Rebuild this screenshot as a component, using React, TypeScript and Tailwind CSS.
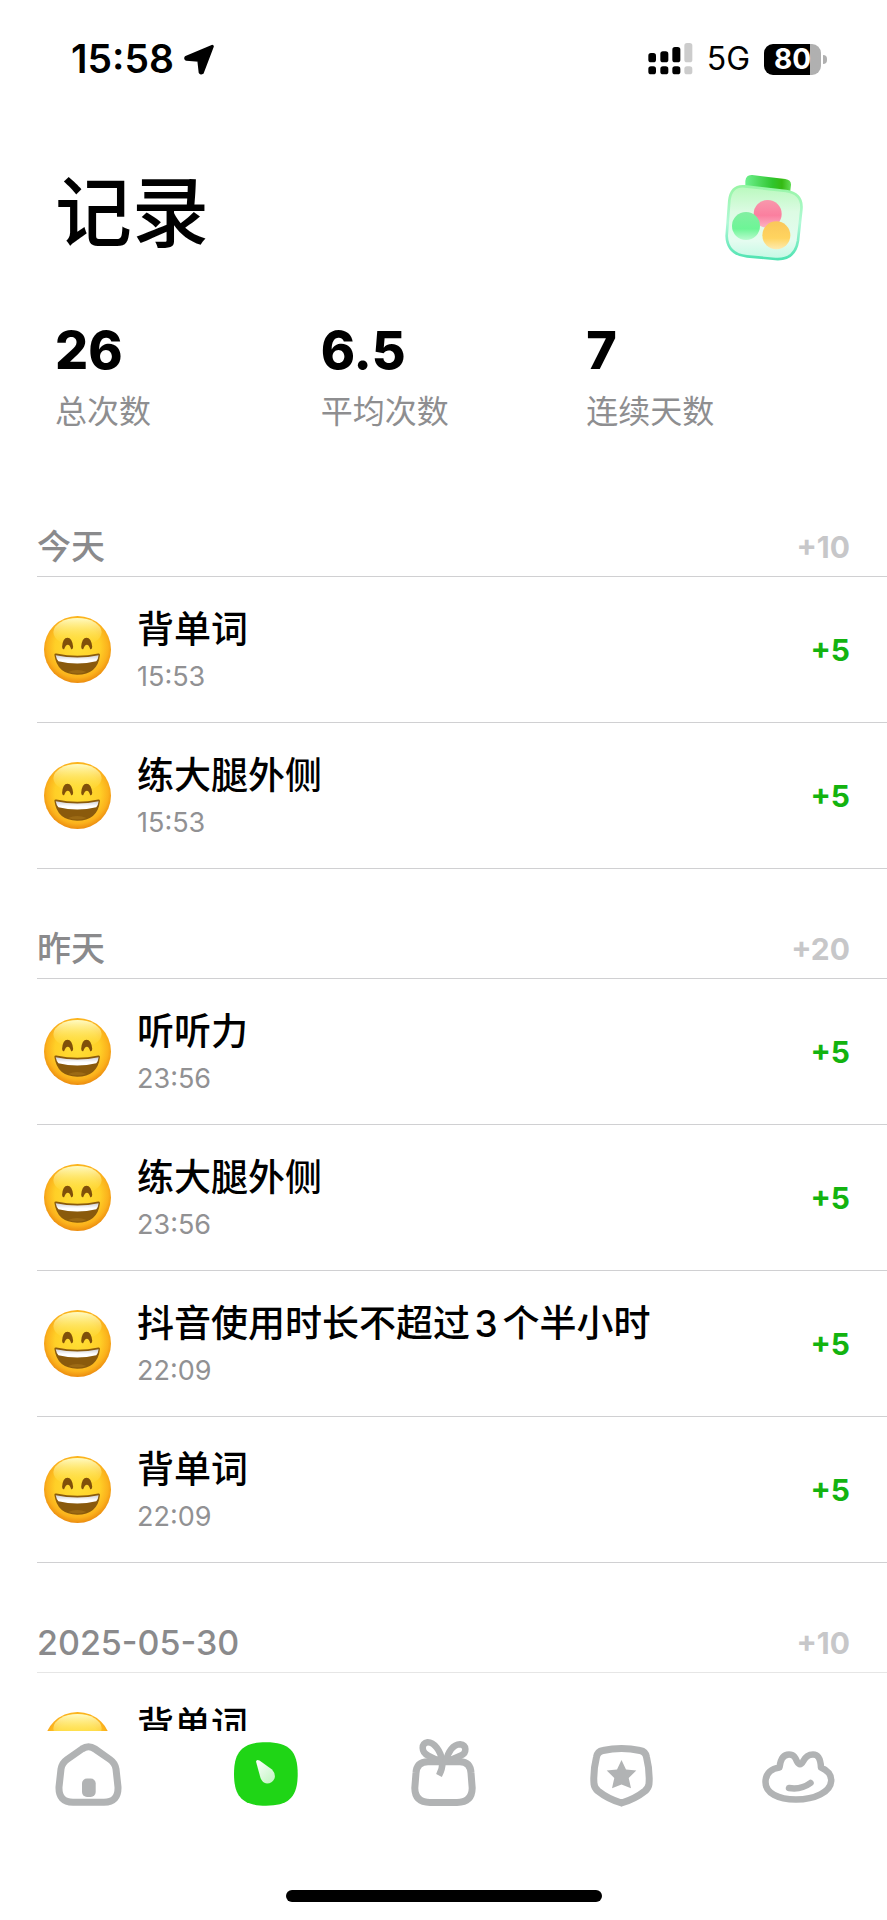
import React from "react";

type Entry = { title: string; time: string; points: string };
type Day = { label: string; total: string; entries: Entry[]; faint?: boolean };

const stats = [
  { value: "26", label: "总次数" },
  { value: "6.5", label: "平均次数" },
  { value: "7", label: "连续天数" },
];

const days: Day[] = [
  {
    label: "今天",
    total: "+10",
    entries: [
      { title: "背单词", time: "15:53", points: "+5" },
      { title: "练大腿外侧", time: "15:53", points: "+5" },
    ],
  },
  {
    label: "昨天",
    total: "+20",
    entries: [
      { title: "听听力", time: "23:56", points: "+5" },
      { title: "练大腿外侧", time: "23:56", points: "+5" },
      { title: "抖音使用时长不超过3个半小时", time: "22:09", points: "+5" },
      { title: "背单词", time: "22:09", points: "+5" },
    ],
  },
  {
    label: "2025-05-30",
    total: "+10",
    faint: true,
    entries: [{ title: "背单词", time: "", points: "" }],
  },
];

function StatusBar() {
  return (
    <div className="flex h-[118px] shrink-0 items-center justify-between pr-[60px] pl-[71px]">
      <div className="flex items-center gap-[10px]">
        <span className="text-[39px] leading-[48px] font-semibold">15:58</span>
        <svg className="h-[31px] w-[31px]" viewBox="0 0 90 90" aria-hidden="true">
          <path
            d="M82 7 6 39Q4 42 7 44L43 47 47 82Q49 86 53 83Z"
            fill="#000"
            stroke="#000"
            strokeWidth="9"
            strokeLinejoin="round"
          />
        </svg>
      </div>
      <div className="flex items-center">
        <svg className="h-8 w-[45px]" viewBox="0 0 135 96" aria-hidden="true">
          <rect x="1" y="30" width="23" height="28" rx="8" />
          <rect x="37" y="25" width="24" height="33" rx="8" />
          <rect x="73" y="12" width="24" height="46" rx="8" />
          <rect x="109" y="0" width="24" height="58" rx="8" fill="#ccc" />
          <rect x="1" y="70" width="23" height="24" rx="8" />
          <rect x="37" y="70" width="24" height="24" rx="8" />
          <rect x="73" y="70" width="24" height="24" rx="8" />
          <rect x="109" y="70" width="24" height="24" rx="8" fill="#ccc" />
        </svg>
        <span className="ml-[14px] text-[32px] leading-[40px]">5G</span>
        <div className="ml-[14px] flex h-[31px] w-[57px] items-center justify-center rounded-[9px] bg-linear-to-r from-black from-80% to-[#b0b0b0] to-80% text-[28px] leading-[31px] font-bold text-white">
          80
        </div>
        <div className="ml-[2px] h-[9px] w-1 rounded-r-full bg-[#b0b0b0]" />
      </div>
    </div>
  );
}

function Jar() {
  return (
    <svg className="h-[88px] w-20" viewBox="75 43 240 264" aria-hidden="true">
      <defs>
        <linearGradient id="lid" x1="0" x2="1">
          <stop offset="0" stopColor="#6ef08f" />
          <stop offset=".6" stopColor="#2fc52d" />
          <stop offset=".8" stopColor="#35ba12" />
          <stop offset="1" stopColor="#62dc55" />
        </linearGradient>
        <linearGradient id="glass" x1="0" y1="0" x2="0" y2="1">
          <stop offset="0" stopColor="#b9f9bd" />
          <stop offset=".35" stopColor="#dcfbe3" />
          <stop offset=".75" stopColor="#e5fcf0" />
          <stop offset="1" stopColor="#c4f9e4" />
        </linearGradient>
        <linearGradient id="rim" x1="0" y1="0" x2="0" y2="1">
          <stop offset="0" stopColor="#98f5a6" />
          <stop offset=".5" stopColor="#b0f9d6" />
          <stop offset="1" stopColor="#4fe3b2" />
        </linearGradient>
        <linearGradient id="pink" x1="0" y1="0" x2="0" y2="1">
          <stop offset="0" stopColor="#f898ac" />
          <stop offset=".55" stopColor="#fb7f9f" />
          <stop offset="1" stopColor="#fcb4c5" />
        </linearGradient>
        <linearGradient id="mint" x1="0" y1="0" x2="0" y2="1">
          <stop offset="0" stopColor="#82efa2" />
          <stop offset=".6" stopColor="#6df596" />
          <stop offset="1" stopColor="#b9fbcf" />
        </linearGradient>
        <linearGradient id="amber" x1="0" y1="0" x2="0" y2="1">
          <stop offset="0" stopColor="#fac75a" />
          <stop offset=".6" stopColor="#ffd45f" />
          <stop offset="1" stopColor="#fdebb0" />
        </linearGradient>
      </defs>
      <path d="M136 88V64Q138 44 157 46L256 58Q274 61 273 76L270 100Z" fill="url(#lid)" />
      <path
        d="M134 80 258 94Q309 101 304 150L294 243Q285 302 226 298L141 290Q82 284 80 229L88 122Q94 76 134 80Z"
        fill="url(#glass)"
        stroke="url(#rim)"
        strokeWidth="8"
      />
      <circle cx="203" cy="163" r="42" fill="url(#pink)" />
      <circle cx="138" cy="199" r="42" fill="url(#mint)" />
      <circle cx="229" cy="227" r="42" fill="url(#amber)" />
    </svg>
  );
}

function SmileDefs() {
  return (
    <svg className="absolute h-0 w-0" aria-hidden="true">
      <defs>
        <radialGradient id="face" cx=".5" cy=".46" r=".56">
          <stop offset="0" stopColor="#ffdf35" />
          <stop offset=".6" stopColor="#ffcf27" />
          <stop offset=".82" stopColor="#fbb11c" />
          <stop offset="1" stopColor="#e8830c" />
        </radialGradient>
        <linearGradient id="shine" x1="0" y1="0" x2="0" y2="1">
          <stop offset="0" stopColor="#fffcc4" />
          <stop offset="1" stopColor="#ffe64a" stopOpacity="0" />
        </linearGradient>
        <linearGradient id="teeth" x1="0" y1="0" x2="0" y2="1">
          <stop offset="0" stopColor="#cfcfd6" />
          <stop offset=".6" stopColor="#ffffff" />
        </linearGradient>
      </defs>
    </svg>
  );
}

function Smile() {
  return (
    <svg className="h-[67px] w-[67px] shrink-0" viewBox="0 0 200 200" aria-hidden="true">
      <circle cx="100" cy="100" r="100" fill="url(#face)" />
      <ellipse cx="100" cy="48" rx="72" ry="42" fill="url(#shine)" />
      <path
        d="M54 92Q56 65 70 65Q84 65 87 92Q87 101 81 99Q77 86 71 86Q65 86 60 99Q54 101 54 92ZM111 92Q113 65 127 65Q141 65 144 92Q144 101 138 99Q134 86 128 86Q122 86 117 99Q111 101 111 92Z"
        fill="#80500a"
      />
      <path d="M31 116Q31 111 37 112Q100 126 162 112Q168 111 167 117Q160 175 99 175Q39 175 31 116Z" fill="#8a5a0c" />
      <path d="M35 117Q100 131 163 117Q162 128 156 135Q99 149 43 135Q37 128 35 117Z" fill="url(#teeth)" />
      <path d="M72 167Q99 156 127 167Q99 177 72 167Z" fill="#a9751a" opacity=".6" />
    </svg>
  );
}

function HomeIcon() {
  return (
    <svg className="h-20 w-20" viewBox="0 0 80 80" fill="none" stroke="#b1b3b4" strokeWidth="7" aria-hidden="true">
      <path d="M33 14Q39.5 9.500 46 14L61 24.500Q66 28 67 34L69 52Q69.500 67 55 67.300H24Q9.500 67 10 52L12 34Q13 28 18 24.500Z" />
      <rect x="33" y="43.500" width="13.700" height="18.500" rx="5" fill="#b1b3b4" stroke="none" />
    </svg>
  );
}

function RecordIcon() {
  return (
    <svg className="h-20 w-20" viewBox="0 0 80 80" aria-hidden="true">
      <defs>
        <linearGradient id="drop" x1="0" y1="0" x2=".8" y2="1">
          <stop offset="0" stopColor="#ffffff" />
          <stop offset="1" stopColor="#c3f5c4" />
        </linearGradient>
      </defs>
      <path d="M40 7.300C63 7.300 71.700 16 71.700 39S63 70.700 40 70.700 8 62 8 39 17 7.300 40 7.300Z" fill="#1fd516" />
      <path d="M30 26.500Q30.500 24 33.500 25.500L46 34.500Q50 39 48.500 43.500Q46 48.500 41 48.500Q36.500 48 34.500 43Z" fill="url(#drop)" />
    </svg>
  );
}

function GiftIcon() {
  return (
    <svg className="h-20 w-20" viewBox="-1 0 80 80" fill="none" stroke="#b1b3b4" strokeWidth="7" aria-hidden="true">
      <path d="M24 26.700H56Q66.500 27 67 38L68.200 53Q68 67.300 53 67.500H26Q11 67.300 10.800 53L12 38Q12.500 27 24 26.700Z" />
      <path d="M38 26C37 16 30 7 23.500 7.300C17 8 17 17 24 20.500C28 23 33 25 38 26Z" strokeWidth="6.500" strokeLinejoin="round" />
      <path d="M42 26C44 17 49 9.500 56 9.300C63 10 63 18 57 20.500C52 23 47 25 42 26Z" strokeWidth="6.500" strokeLinejoin="round" />
      <path d="M38.500 27Q38.500 34 35 40.500" strokeWidth="6.500" />
    </svg>
  );
}

function ShieldIcon() {
  return (
    <svg className="h-20 w-20" viewBox="0 0 80 80" fill="none" stroke="#b1b3b4" strokeWidth="7" aria-hidden="true">
      <path d="M22 15.500Q40.500 11.500 59 15.500Q64.500 16.500 65.500 22Q69 36 68 49Q67.500 53 64 56Q54 64 40.500 68Q27 64 17 56Q13.500 53 13 49Q12 36 15.500 22Q16.500 16.500 22 15.500Z" />
      <path d="M40.500 25 45 34.500 55.300 35.500 47.700 43 50 53.300 40.500 49.500 31 53.300 33.300 43 25.700 35.500 36 34.500Z" fill="#b1b3b4" stroke="none" />
    </svg>
  );
}

function FrogIcon() {
  return (
    <svg
      className="h-20 w-20"
      viewBox="-1 0 80 80"
      fill="none"
      stroke="#b1b3b4"
      strokeWidth="6.500"
      strokeLinejoin="round"
      strokeLinecap="round"
      aria-hidden="true"
    >
      <path d="M20.500 32.500C21.500 23 25 19.500 30 19.500C35 19.500 36.500 23 38 26.500Q41 32 44 26.500C46 22.500 49 19.500 54 19.500C59 19.500 61.500 23 62 32.500C69 35.500 72.500 40 72.200 46C71.500 57 56 64.500 37 64.500C19 64.500 6.500 58 6.500 47C6.500 38 13 33.500 20.500 32.500Z" />
      <path d="M30 53Q42 55 51.500 48" />
    </svg>
  );
}

const tabs = [
  { name: "首页", Icon: HomeIcon },
  { name: "记录", Icon: RecordIcon },
  { name: "奖励", Icon: GiftIcon },
  { name: "成就", Icon: ShieldIcon },
  { name: "我的", Icon: FrogIcon },
];

function DaySection({ day }: { day: Day }) {
  const line = day.faint ? "border-[#e6e6e6]" : "border-[#d0d0d2]";
  return (
    <section className="pl-[37px]">
      <div className={`flex h-[110px] items-end justify-between border-b pr-[37px] pb-[5px] ${line}`}>
        <h2 className="text-[34px] leading-[48px] font-medium text-[#8a8a8c]">{day.label}</h2>
        <span className="text-[30px] leading-[48px] font-bold text-[#c7c7c9]">{day.total}</span>
      </div>
      <ul>
        {day.entries.map((entry) => (
          <li key={entry.title} className="flex h-[146px] items-center border-b border-[#d0d0d2] pr-[37px] pl-[7px]">
            <Smile />
            <div className="ml-[26px] flex flex-1 flex-col gap-[6px]">
              <h3 className="text-[37px] leading-[48px] font-medium [text-autospace:normal]">{entry.title}</h3>
              <time className="h-[34px] text-[27px] leading-[34px] text-[#919193]">{entry.time}</time>
            </div>
            <span className="text-[30px] leading-[40px] font-bold text-[#13b30f]">{entry.points}</span>
          </li>
        ))}
      </ul>
    </section>
  );
}

export default function App() {
  return (
    <div
      lang="zh-CN"
      className="flex h-screen flex-col overflow-hidden bg-white font-['Inter','Noto_Sans_CJK_SC',sans-serif] text-black"
    >
      <SmileDefs />
      <StatusBar />
      <header className="flex h-[190px] shrink-0 items-center justify-between pr-[82px] pl-[55px]">
        <h1 className="text-[77px] leading-[100px] font-medium">记录</h1>
        <button type="button" aria-label="奖励罐" className="mt-[10px]">
          <Jar />
        </button>
      </header>
      <dl className="grid shrink-0 grid-cols-3 pt-[13px] pr-[35px] pb-[31px] pl-[55px]">
        {stats.map((stat) => (
          <div key={stat.label} className="flex flex-col-reverse gap-[7px]">
            <dt className="text-[32px] leading-[48px] font-normal text-[#8e8e90]">{stat.label}</dt>
            <dd className="text-[52px] leading-[60px] font-extrabold">{stat.value}</dd>
          </div>
        ))}
      </dl>
      <main className="min-h-0 flex-1 overflow-hidden">
        {days.map((day) => (
          <DaySection key={day.label} day={day} />
        ))}
      </main>
      <nav className="flex h-[189px] shrink-0 flex-col justify-between pt-1 pb-[18px]">
        <div className="grid grid-cols-5">
          {tabs.map(({ name, Icon }) => (
            <button key={name} type="button" aria-label={name} className="flex justify-center">
              <Icon />
            </button>
          ))}
        </div>
        <div className="mx-auto h-[12px] w-[316px] rounded-full bg-black" />
      </nav>
    </div>
  );
}
